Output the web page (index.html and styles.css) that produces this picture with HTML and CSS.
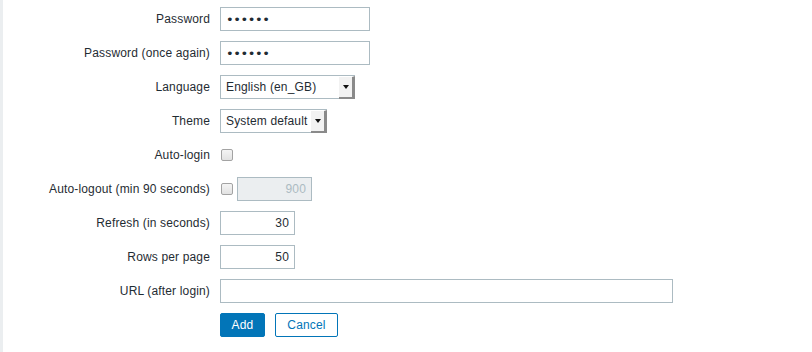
FILE: index.html
```html
<!DOCTYPE html>
<html lang="en">
  <head>
    <meta charset="UTF-8" />
    <meta name="viewport" content="width=device-width, initial-scale=1.0" />
    <title>User profile</title>
    <link rel="stylesheet" href="styles.css">
  </head>
  <body>
    <div class="page">
      <form class="form-list">
        <div class="row">
          <label class="label" for="password1">Password</label>
          <div class="field">
            <input class="input input-pass" id="password1" type="password" value="zabbix" />
          </div>
        </div>

        <div class="row">
          <label class="label" for="password2">Password (once again)</label>
          <div class="field">
            <input class="input input-pass" id="password2" type="password" value="zabbix" />
          </div>
        </div>

        <div class="row">
          <label class="label" for="lang">Language</label>
          <div class="field">
            <span class="select select-lang">
              <select id="lang">
                <option>English (en_GB)</option>
              </select>
            </span>
          </div>
        </div>

        <div class="row">
          <label class="label" for="theme">Theme</label>
          <div class="field">
            <span class="select select-theme">
              <select id="theme">
                <option>System default</option>
              </select>
            </span>
          </div>
        </div>

        <div class="row">
          <label class="label" for="autologin">Auto-login</label>
          <div class="field">
            <input class="checkbox" id="autologin" type="checkbox" />
          </div>
        </div>

        <div class="row">
          <label class="label" for="autologout">Auto-logout (min 90 seconds)</label>
          <div class="field">
            <input class="checkbox" id="autologout" type="checkbox" />
            <input class="input input-num input-logout" type="text" value="900" disabled />
          </div>
        </div>

        <div class="row">
          <label class="label" for="refresh">Refresh (in seconds)</label>
          <div class="field">
            <input class="input input-num" id="refresh" type="text" value="30" />
          </div>
        </div>

        <div class="row">
          <label class="label" for="rows">Rows per page</label>
          <div class="field">
            <input class="input input-num" id="rows" type="text" value="50" />
          </div>
        </div>

        <div class="row">
          <label class="label" for="url">URL (after login)</label>
          <div class="field">
            <input class="input input-url" id="url" type="text" value="" />
          </div>
        </div>

        <div class="row">
          <span class="label"></span>
          <div class="field buttons">
            <button class="btn btn-primary" type="button">Add</button>
            <button class="btn btn-alt" type="button">Cancel</button>
          </div>
        </div>
      </form>
    </div>
  </body>
</html>
```

FILE: styles.css
```css
* {
  margin: 0;
  padding: 0;
  box-sizing: border-box;
}

body {
  font-family: "Liberation Sans", Arial, sans-serif;
  font-size: 12px;
  letter-spacing: 0.15px;
  color: #1f2c33;
  background: #ffffff;
}

.page {
  min-height: 352px;
  border-left: 3px solid #ebeef0;
  padding-top: 7px;
}

.form-list {
  display: flex;
  flex-direction: column;
  gap: 10px;
}

.row {
  display: flex;
  align-items: center;
  height: 24px;
}

.label {
  width: 217px;
  flex-shrink: 0;
  padding-right: 10px;
  text-align: right;
  white-space: nowrap;
}

.field {
  display: flex;
  align-items: center;
  gap: 4px;
}

.input {
  height: 24px;
  border: 1px solid #acbbc2;
  background: #ffffff;
  color: #1f2c33;
  font-family: "Liberation Sans", Arial, sans-serif;
  font-size: 12px;
  letter-spacing: 0.15px;
  padding: 0 5px;
  outline: none;
}

.input-pass {
  width: 150px;
  font-family: "DejaVu Sans", sans-serif;
  font-size: 13px;
  letter-spacing: -0.4px;
  color: #1f2c33;
}

.input-num {
  width: 75px;
  text-align: right;
}

.input-logout {
  background: #ebeef0;
  color: #acbbc2;
}

.input-url {
  width: 453px;
}

/* selects with the old 3d arrow button */
.select {
  position: relative;
  display: inline-block;
  height: 24px;
}

.select select {
  appearance: none;
  -webkit-appearance: none;
  height: 24px;
  width: 100%;
  border: 1px solid #acbbc2;
  background: #ffffff;
  color: #1f2c33;
  font-family: "Liberation Sans", Arial, sans-serif;
  font-size: 12px;
  letter-spacing: 0.15px;
  padding: 0 16px 0 5px;
  outline: none;
}

.select-lang {
  width: 135px;
}

.select-theme {
  width: 107px;
}

.select::after {
  content: "";
  position: absolute;
  top: 1px;
  right: 0;
  bottom: 0;
  width: 13px;
  background: #f2f2f2;
  border-right: 3px solid #8a8a8a;
  border-bottom: 2px solid #8a8a8a;
  border-top: 1px solid #ffffff;
  pointer-events: none;
}

.select::before {
  content: "";
  position: absolute;
  top: 10px;
  right: 6px;
  width: 0;
  height: 0;
  border-left: 3px solid transparent;
  border-right: 3px solid transparent;
  border-top: 4px solid #111111;
  z-index: 1;
  pointer-events: none;
}

.checkbox {
  appearance: none;
  -webkit-appearance: none;
  width: 12px;
  height: 12px;
  margin: 0 0 1px 1px;
  border: 1px solid #a3a3a3;
  border-radius: 2px;
  background: linear-gradient(#f4f4f4, #e2e2e2);
}

.buttons {
  gap: 10px;
}

.btn {
  height: 24px;
  padding: 0;
  border: 1px solid #0275b8;
  border-radius: 2px;
  font-family: "Liberation Sans", Arial, sans-serif;
  font-size: 12px;
  letter-spacing: 0.15px;
  cursor: pointer;
}

.btn-primary {
  width: 45px;
  background: #0275b8;
  color: #ffffff;
}

.btn-alt {
  width: 63px;
  background: #ffffff;
  color: #0275b8;
}
```
